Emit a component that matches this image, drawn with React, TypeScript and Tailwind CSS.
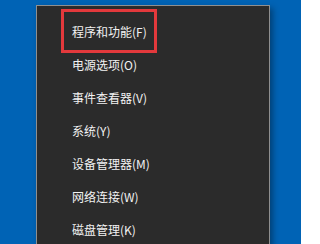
import React from "react";

const items = [
  "程序和功能(F)",
  "电源选项(O)",
  "事件查看器(V)",
  "系统(Y)",
  "设备管理器(M)",
  "网络连接(W)",
  "磁盘管理(K)",
];

export default function App() {
  return (
    <div className="relative w-[301px] h-[244px] overflow-hidden bg-[#0063b5] pt-[5px] pl-[36px]">
      <div
        className="w-[234px] h-[260px] bg-[#2b2b2b] border border-[#8f8f8f] pt-[9px] shadow-[3px_3px_6px_rgba(0,0,0,0.35)]"
        style={{ fontFamily: '"Noto Sans CJK SC", "Noto Sans", sans-serif' }}
      >
        {items.map((t) => (
          <div key={t} className="h-[33px] flex items-center pl-[35px] text-[12px] text-[#f2f2f2] leading-none">
            {t}
          </div>
        ))}
      </div>
      <div className="absolute left-[61px] top-[9px] w-[96px] h-[44px] border-[3px] border-[#e3393c]" />
    </div>
  );
}
